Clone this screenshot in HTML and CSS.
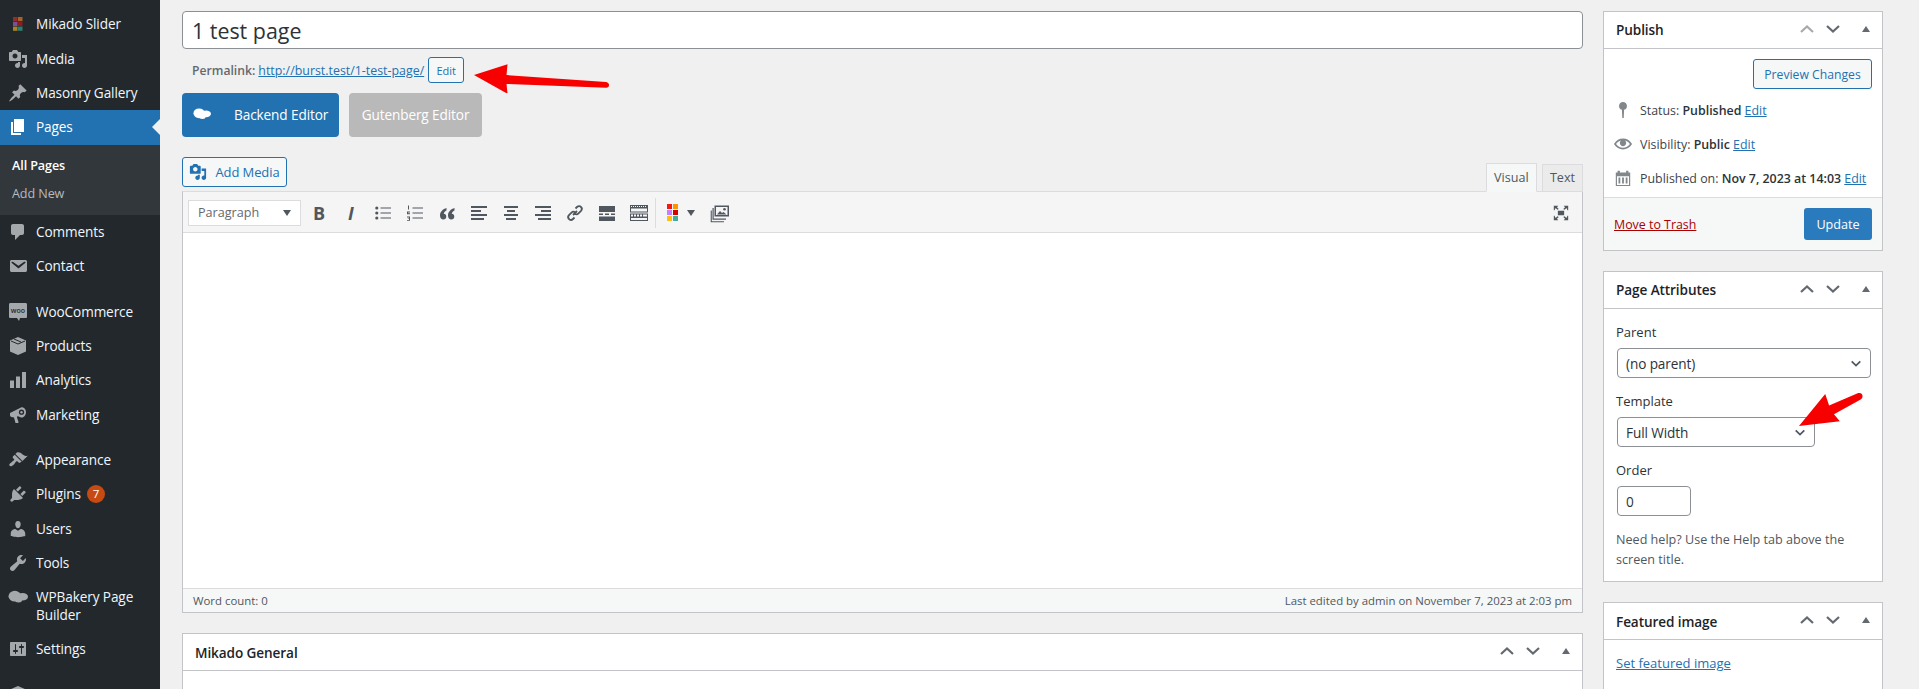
FILE: index.html
```html
<!DOCTYPE html>
<html lang="en">
<head>
<meta charset="utf-8">
<title>Edit Page</title>
<link rel="stylesheet" href="styles.css">
</head>
<body>
<div class="shell">
<nav class="sidebar">
  <ul class="menu">
    <li class="item"><span class="ico"><svg class="grid-ico" viewBox="0 0 10 14"><rect width="4.5" height="4.2" fill="#8f2e2a"/><rect x="5" width="4.5" height="4.2" fill="#a4632a"/><rect y="4.8" width="4.5" height="4.2" fill="#7d4f9a"/><rect x="5" y="4.8" width="4.5" height="4.2" fill="#8e1c1c"/><rect y="9.6" width="4.5" height="4.2" fill="#a98322"/><rect x="5" y="9.6" width="4.5" height="4.2" fill="#2f7c70"/></svg></span>Mikado Slider</li>
    <li class="item"><span class="ico"><svg viewBox="0 0 20 20"><path d="M13 11V4c0-.55-.45-1-1-1h-1.67L9 1H5L3.67 3H2c-.55 0-1 .45-1 1v7c0 .55.45 1 1 1h10c.55 0 1-.45 1-1zM7 4.5c1.38 0 2.5 1.12 2.5 2.5S8.38 9.5 7 9.5 4.5 8.38 4.5 7 5.62 4.5 7 4.5zM14 6h5v10.5c0 1.38-1.12 2.5-2.5 2.5S14 17.88 14 16.5s1.12-2.5 2.5-2.5c.17 0 .34.02.5.05V9h-3V6zm-4 8.05V13h2v3.5c0 1.38-1.12 2.5-2.5 2.5S7 17.88 7 16.5 8.12 14 9.5 14c.17 0 .34.02.5.05z"/></svg></span>Media</li>
    <li class="item"><span class="ico"><svg viewBox="0 0 20 20"><path d="M10.44 3.02l1.82-1.82 6.36 6.35-1.83 1.82c-1.05-.68-2.48-.57-3.41.36l-.75.75c-.92.93-1.04 2.35-.35 3.41l-1.83 1.82-2.41-2.41-2.8 2.79c-.42.42-3.38 2.71-3.8 2.29s1.86-3.39 2.28-3.81l2.79-2.79L4.1 9.36l1.83-1.82c1.05.69 2.48.57 3.4-.36l.75-.75c.93-.92 1.05-2.35.36-3.41z"/></svg></span>Masonry Gallery</li>
    <li class="item active"><span class="ico"><svg viewBox="0 0 20 20"><path d="M6 15V2h10v13H6zm-1 1h8v2H3V5h2v11z"/></svg></span>Pages</li>
    <li class="submenu">
      <a class="sub current">All Pages</a>
      <a class="sub">Add New</a>
    </li>
    <li class="item"><span class="ico"><svg viewBox="0 0 20 20"><path d="M5 2h9c1.1 0 2 .9 2 2v7c0 1.1-.9 2-2 2h-2l-5 5v-5H5c-1.1 0-2-.9-2-2V4c0-1.1.9-2 2-2z"/></svg></span>Comments</li>
    <li class="item"><span class="ico"><svg viewBox="0 0 20 20"><path d="M3.87 4h13.25C18.37 4 19 4.59 19 5.79v8.42c0 1.19-.63 1.79-1.88 1.79H3.87c-1.25 0-1.88-.6-1.88-1.79V5.79c0-1.2.63-1.79 1.88-1.79zm6.62 8.6l6.74-5.53c.24-.2.43-.66.13-1.07-.29-.41-.82-.42-1.17-.17l-5.7 3.86L4.8 5.83c-.35-.25-.88-.24-1.17.17-.3.41-.11.87.13 1.07z"/></svg></span>Contact</li>
    <li class="item sep"><span class="ico"><svg viewBox="0 0 20 20"><path d="M2.5 1h15C18.500 1 19 1.600 19 2.500v12c0 1-.5 1.500-1.500 1.500H12l-1 3-2-3H2.500C1.500 16 1 15.500 1 14.500v-12C1 1.600 1.500 1 2.500 1z"/><text x="10" y="11" class="woo-text">woo</text></svg></span>WooCommerce</li>
    <li class="item"><span class="ico"><svg viewBox="0 0 20 20"><path d="M10 1l8 3.500v11L10 19l-8-3.500v-11z"/><path class="cut" d="M3 5l7 3 7-3M6 3l7 3"/></svg></span>Products</li>
    <li class="item"><span class="ico"><svg viewBox="0 0 20 20"><path d="M2 10.500h4V18H2zM8 6.500h4V18H8zM14 2h4v16h-4z"/></svg></span>Analytics</li>
    <li class="item"><span class="ico"><svg viewBox="0 0 20 20"><path d="M2 8l11-5.500c2.500-1 5 1.500 5 4.500s-2 6-5 5.500L9.500 11 9 12.500l1.500 4.500c.2.600-.3 1-1 1H7.500L6 12.500 3.500 12C2.500 11.700 2 11 2 10z"/><circle class="cut-fill" cx="13.500" cy="7.200" r="2.600"/><circle cx="13.500" cy="7.200" r="1.200"/></svg></span>Marketing</li>
    <li class="item sep"><span class="ico"><svg viewBox="0 0 20 20"><path d="M14.48 11.06L7.41 3.99l1.5-1.5c.5-.56 2.3-.47 3.51.32 1.21.8 1.43 1.28 2.91 2.1 1.18.64 2.45 1.26 4.45.85zm-.71.71L6.7 4.7 4.93 6.47c-.39.39-.39 1.02 0 1.41l1.06 1.06c.39.39.39 1.03 0 1.42-.6.6-1.43 1.11-2.21 1.69-.35.26-.7.53-1.01.84C1.43 13.23.78 14.92 1.7 15.84c.92.92 2.61.27 3.95-1.07.31-.31.58-.66.84-1.01.58-.78 1.09-1.61 1.69-2.21.39-.39 1.03-.39 1.42 0l1.06 1.06c.39.39 1.02.39 1.41 0z"/></svg></span>Appearance</li>
    <li class="item"><span class="ico"><svg viewBox="0 0 20 20"><path d="M13.11 4.36L9.87 7.6 8 5.73l3.24-3.24c.35-.34 1.05-.2 1.56.32.52.51.66 1.21.31 1.55zm-8 1.77l.91-1.12 9.01 9.01-1.19.84c-.71.71-2.63 1.16-3.82 1.16H6.14L4.9 17.26c-.59.59-1.54.59-2.12 0-.59-.58-.59-1.53 0-2.12l1.24-1.24v-3.88c0-1.13.4-3.19 1.09-3.89zm7.26 3.97l3.24-3.24c.34-.35 1.04-.21 1.55.31.52.51.66 1.21.31 1.55l-3.24 3.25z"/></svg></span>Plugins<span class="badge">7</span></li>
    <li class="item"><span class="ico"><svg viewBox="0 0 20 20"><path d="M10 9.25c-2.27 0-2.73-3.44-2.73-3.44C7 4.02 7.82 2 9.97 2c2.16 0 2.98 2.02 2.71 3.81 0 0-.41 3.44-2.68 3.44zm0 2.57L12.72 10c2.39 0 4.52 2.33 4.52 4.53v2.49s-3.65 1.13-7.24 1.13c-3.65 0-7.24-1.13-7.24-1.13v-2.49c0-2.25 1.94-4.48 4.47-4.48z"/></svg></span>Users</li>
    <li class="item"><span class="ico"><svg viewBox="0 0 20 20"><path d="M16.68 9.77c-1.34 1.34-3.3 1.67-4.95.99l-5.41 6.52c-.99.99-2.59.99-3.58 0s-.99-2.59 0-3.57l6.52-5.42c-.68-1.65-.35-3.61.99-4.95 1.28-1.28 3.12-1.62 4.72-1.06l-2.89 2.89 2.82 2.82 2.86-2.87c.53 1.58.18 3.39-1.08 4.65z"/></svg></span>Tools</li>
    <li class="item two"><span class="ico"><svg viewBox="0 0 20 20"><use href="#cloud"/></svg></span>WPBakery Page<br>Builder</li>
    <li class="item"><span class="ico"><svg viewBox="0 0 20 20"><path d="M18 16V4c0-.55-.45-1-1-1H3c-.55 0-1 .45-1 1v12c0 .55.45 1 1 1h14c.55 0 1-.45 1-1zM8 11h1c.55 0 1 .45 1 1s-.45 1-1 1H8v1.5c0 .28-.22.5-.5.5s-.5-.22-.5-.5V13H6c-.55 0-1-.45-1-1s.45-1 1-1h1V5.5c0-.28.22-.5.5-.5s.5.22.5.5V11zm5-2h-1c-.55 0-1-.45-1-1s.45-1 1-1h1V5.5c0-.28.22-.5.5-.5s.5.22.5.5V7h1c.55 0 1 .45 1 1s-.45 1-1 1h-1v5.5c0 .28-.22.5-.5.5s-.5-.22-.5-.5V9z"/></svg></span>Settings</li>
    <li class="item sep"><span class="ico"><svg viewBox="0 0 20 20"><path d="M10 1l8 3.500v11L10 19l-8-3.500v-11z"/></svg></span></li>
  </ul>
</nav>

<main class="content">
  <div class="editor-col">
    <div class="title-box">1 test page</div>
    <div class="permalink">
      <strong class="perm-label">Permalink:</strong>
      <a class="link perm-link">http://burst.test/1-test-page/</a>
      <span class="btn btn-xs">Edit</span>
    </div>
    <div class="switch-row">
      <div class="switch backend"><svg class="cloud" viewBox="0 0 20 20"><use href="#cloud"/></svg>Backend Editor</div>
      <div class="switch gutenberg">Gutenberg Editor</div>
    </div>
    <div class="tool-row">
      <div class="btn add-media"><svg viewBox="0 0 20 20"><path d="M13 11V4c0-.55-.45-1-1-1h-1.67L9 1H5L3.67 3H2c-.55 0-1 .45-1 1v7c0 .55.45 1 1 1h10c.55 0 1-.45 1-1zM7 4.5c1.38 0 2.5 1.12 2.5 2.5S8.38 9.5 7 9.5 4.5 8.38 4.5 7 5.62 4.5 7 4.5zM14 6h5v10.5c0 1.38-1.12 2.5-2.5 2.5S14 17.88 14 16.5s1.12-2.5 2.5-2.5c.17 0 .34.02.5.05V9h-3V6zm-4 8.05V13h2v3.5c0 1.38-1.12 2.5-2.5 2.5S7 17.88 7 16.5 8.12 14 9.5 14c.17 0 .34.02.5.05z"/></svg>Add Media</div>
      <div class="tabs">
        <div class="tab on">Visual</div>
        <div class="tab">Text</div>
      </div>
    </div>
    <div class="editor">
      <div class="toolbar">
        <div class="format">Paragraph<span class="caret"></span></div>
        <span class="tb tb-b">B</span>
        <span class="tb tb-i">I</span>
        <span class="tb"><svg viewBox="0 0 20 20"><path d="M7.500 4.500H18v1H7.500zM7.500 9.500H18v1H7.500zM7.500 14.500H18v1H7.500z"/><circle cx="3.800" cy="5" r="1.600"/><circle cx="3.800" cy="10" r="1.600"/><circle cx="3.800" cy="15" r="1.600"/></svg></span>
        <span class="tb"><svg viewBox="0 0 20 20"><path d="M7.500 4.500H18v1H7.500zM7.500 9.500H18v1H7.500zM7.500 14.500H18v1H7.500z"/><path d="M3 2.500h1v4H3zM2 8.500h3v1H3.200v.8H5v.9H2zM2 13.500h3v4.300H2v-.9h2v-.8H2.800v-.7H4v-.9H2z"/></svg></span>
        <span class="tb"><svg viewBox="0 0 20 20"><path d="M9.500 5C6 6 3 8.500 3 12.500 3 15 4.500 16.500 6.300 16.500c1.800 0 3-1.300 3-3 0-1.500-1-2.700-2.600-2.800.4-1.500 1.500-2.700 2.800-3.300zM17.500 5c-3.500 1-6.500 3.500-6.500 7.500 0 2.500 1.500 4 3.300 4 1.800 0 3-1.300 3-3 0-1.500-1-2.700-2.600-2.800.4-1.500 1.500-2.700 2.800-3.300z"/></svg></span>
        <span class="tb"><svg viewBox="0 0 20 20"><path d="M2 3h16v2H2zM2 7h10v2H2zM2 11h16v2H2zM2 15h13v2H2z"/></svg></span>
        <span class="tb"><svg viewBox="0 0 20 20"><path d="M3 3h14v2H3zM6 7h8v2H6zM3 11h14v2H3zM5 15h10v2H5z"/></svg></span>
        <span class="tb"><svg viewBox="0 0 20 20"><path d="M2 3h16v2H2zM8 7h10v2H8zM2 11h16v2H2zM5 15h13v2H5z"/></svg></span>
        <span class="tb"><svg viewBox="0 0 20 20"><path class="link-ico" d="M8 12l4-4M10.500 5.500l1.500-1.500c1.300-1.300 3-1.300 4 0 1.100 1.100 1.100 2.700 0 3.900l-2.500 2.500c-1.100 1.100-2.600 1.100-3.700.2M9.500 14.500L8 16c-1.300 1.300-3 1.300-4 0-1.100-1.100-1.100-2.700 0-3.900l2.500-2.500c1.100-1.100 2.600-1.100 3.700-.2"/></svg></span>
        <span class="tb"><svg viewBox="0 0 20 20"><path d="M2 3h16v6H2zM2 10.500h4V12H2zM8 10.500h4V12H8zM14 10.500h4V12h-4zM2 13.500h16V18H2z"/></svg></span>
        <span class="tb"><svg viewBox="0 0 20 20"><path fill-rule="evenodd" d="M1 2h18v7.500H1zM2 3v1h1V3zm2 0v1h1V3zm2 0v1h1V3zm2 0v1h1V3zm2 0v1h1V3zm2 0v1h1V3zm2 0v1h1V3zm2 0v1h1V3zM2 5.500v3h16v-3zM1 10.500h18V18H1zM2 11.500v2h2v-2zm3 0v2h2v-2zm3 0v2h2v-2zm3 0v2h2v-2zm3 0v2h4v-2zM2 15v2h16v-2z"/></svg></span>
        <span class="tb-div"></span>
        <span class="colors"><i class="c1"></i><i class="c2"></i><i class="c3"></i><i class="c4"></i><i class="c5"></i><i class="c6"></i></span>
        <span class="caret caret-b"></span>
        <span class="tb tb-gal"><svg viewBox="0 0 20 20"><path d="M4.500 2.500H19v11H4.500zM6 4v8h11.500V4z" fill-rule="evenodd"/><path d="M2.500 5H3.700v10.500H16v1.200H2.500zM.7 7.500H1.800v10.700H14v1.100H.7z"/><path d="M7 11.500l3-3.500 2 2 1.500-1 3 2.500z"/><circle cx="14.500" cy="6.200" r="1.300"/></svg></span>
        <span class="tb tb-full"><svg viewBox="0 0 20 20"><path d="M6.500 7.500h7v5h-7z"/><path d="M2 2h5L5.500 3.500 7.500 5.500 6 6.500 4 4.500 2.800 7 2 7zM18 2v5h-.8L16 4.500 14 6.500 12.500 5.500 14.500 3.500 13 2zM2 18v-5h.8L4 15.500 6 13.500 7.500 14.500 5.500 16.500 7 18zM18 18h-5l1.500-1.500-2-2L14 13.500l2 2 1.200-2.500h.8z"/></svg></span>
      </div>
      <div class="canvas"></div>
      <div class="status"><span>Word count: 0</span><span>Last edited by admin on November 7, 2023 at 2:03 pm</span></div>
    </div>
    <section class="box box-general">
      <header class="box-head"><h2>Mikado General</h2><span class="handles"><svg viewBox="0 0 14 8"><path d="M1 7l6-5.500L13 7"/></svg><svg viewBox="0 0 14 8"><path d="M1 1l6 5.500L13 1"/></svg><i class="tri"></i></span></header>
      <div class="box-fill"></div>
    </section>
  </div>

  <aside class="side-col">
    <section class="box">
      <header class="box-head"><h2 class="lift">Publish</h2><span class="handles"><svg class="dim" viewBox="0 0 14 8"><path d="M1 7l6-5.500L13 7"/></svg><svg viewBox="0 0 14 8"><path d="M1 1l6 5.500L13 1"/></svg><i class="tri"></i></span></header>
      <div class="pub-top"><span class="btn preview">Preview Changes</span></div>
      <div class="pub-row first"><svg class="pub-ico" viewBox="0 0 20 20"><path d="M10 1a4.500 4.500 0 0 1 1.200 8.800L10.800 19H9.200L8.800 9.800A4.500 4.500 0 0 1 10 1z"/></svg><span>Status: <b>Published</b> <a class="link">Edit</a></span></div>
      <div class="pub-row"><svg class="pub-ico" viewBox="0 0 20 20"><path d="M19.700 9.400C17.700 6 14 3.900 10 3.900S2.300 6 .3 9.400L0 10l.3.6c2 3.400 5.700 5.500 9.700 5.500s7.700-2.100 9.700-5.500l.3-.6-.3-.6zM10 14.100c-3.100 0-6-1.600-7.700-4.100C3.600 8 5.700 6.600 8 6.100c-.9.6-1.500 1.700-1.500 2.900 0 1.900 1.600 3.500 3.500 3.500s3.500-1.600 3.500-3.500c0-1.200-.6-2.300-1.500-2.900 2.300.5 4.400 1.900 5.700 3.900-1.700 2.500-4.600 4.100-7.700 4.100z"/></svg><span>Visibility: <b>Public</b> <a class="link">Edit</a></span></div>
      <div class="pub-row"><svg class="pub-ico" viewBox="0 0 20 20"><path fill-rule="evenodd" d="M2 4h2V2h2.500v2h7V2H16v2h2v15H2zM3.300 8v9.800h13.400V8zM5 9.500h2V16H5zM9 9.500h2V16H9zM13 9.500h2V16h-2z"/></svg><span>Published on: <b>Nov 7, 2023 at 14:03</b> <a class="link">Edit</a></span></div>
      <div class="pub-foot"><a class="trash">Move to Trash</a><span class="update">Update</span></div>
    </section>

    <section class="box">
      <header class="box-head"><h2 class="lift">Page Attributes</h2><span class="handles"><svg viewBox="0 0 14 8"><path d="M1 7l6-5.500L13 7"/></svg><svg viewBox="0 0 14 8"><path d="M1 1l6 5.500L13 1"/></svg><i class="tri"></i></span></header>
      <div class="attrs">
        <div class="attr-label">Parent</div>
        <div class="field sel-wide">(no parent)<svg viewBox="0 0 14 8"><path d="M2 1.500l5 5 5-5"/></svg></div>
        <div class="attr-label">Template</div>
        <div class="field sel-mid">Full Width<svg viewBox="0 0 14 8"><path d="M2 1.500l5 5 5-5"/></svg></div>
        <div class="attr-label">Order</div>
        <div class="field num">0</div>
        <p class="help">Need help? Use the Help tab above the screen title.</p>
      </div>
    </section>

    <section class="box">
      <header class="box-head"><h2>Featured image</h2><span class="handles"><svg viewBox="0 0 14 8"><path d="M1 7l6-5.500L13 7"/></svg><svg viewBox="0 0 14 8"><path d="M1 1l6 5.500L13 1"/></svg><i class="tri"></i></span></header>
      <div class="feat"><a class="link">Set featured image</a></div>
    </section>
  </aside>
</main>
</div>

<svg class="arrow arrow-a" viewBox="0 0 140 30"><path d="M0 12L34 1l-1 11 101 7c4 .5 4 6 0 6L33 21l1 10z"/></svg>
<svg class="arrow arrow-b" viewBox="0 0 70 36"><path d="M0 35L27 2l4 12 30-13c5-1 6 5 2 7L36 23l6 7z"/></svg>

<svg class="defs" aria-hidden="true"><defs><symbol id="cloud" viewBox="0 0 20 20"><ellipse cx="6.800" cy="9.200" rx="6.300" ry="5.400"/><ellipse cx="14.500" cy="9.800" rx="5.500" ry="3.800"/><ellipse cx="10.500" cy="13" rx="3.500" ry="2.500"/></symbol></defs></svg>
</body>
</html>
```

FILE: styles.css
```css
* { box-sizing: border-box; }
html, body { margin: 0; height: 689px; overflow: hidden; }
body {
  background: #f0f0f1;
  color: #3c434a;
  font-family: "Open Sans", "Noto Sans", "Liberation Sans", sans-serif;
  font-size: 13px;
  position: relative;
}
a { color: inherit; }
.defs { position: absolute; width: 0; height: 0; }
.shell { display: flex; height: 689px; overflow: hidden; }

/* sidebar */
.sidebar { width: 160px; flex: none; background: #23282d; color: #f0f6fc; font-size: 13.6px; letter-spacing: -.1px; }
.menu { list-style: none; margin: 0; padding: 7.3px 0 0; }
.item { height: 34.33px; display: flex; align-items: center; position: relative; padding-left: 36px; padding-top: 0; line-height: 18px; white-space: nowrap; }
.item .ico { position: absolute; left: 0; top: 0; width: 36px; height: 34px; display: flex; align-items: center; justify-content: center; }
.item .ico svg { width: 20px; height: 20px; fill: #a5a8ab; }
.item .ico svg.grid-ico { width: 10px; height: 14px; }
.item.sep { margin-top: 11px; }
.item.two { height: 52px; white-space: normal; display: block; padding-top: 8px; }
.item.active { background: #2271b1; color: #fff; }
.item.active .ico svg { fill: #fff; }
.item.active::after { content: ""; position: absolute; right: 0; top: 9px; border: 8px solid transparent; border-left-width: 0; border-right-color: #f0f0f1; }
.cut { fill: none; stroke: #23282d; stroke-width: 1; }
.cut-fill { fill: #23282d !important; }
.woo-text { fill: #23282d; font-family: "Open Sans", sans-serif; font-size: 7px; font-weight: 600; text-anchor: middle; letter-spacing: 0; }
.badge { width: 18px; height: 18px; border-radius: 50%; background: #c64a12; color: #fff; font-size: 11.5px; display: flex; align-items: center; justify-content: center; margin-left: 6px; }
.submenu { background: #32373c; height: 70.4px; padding-top: 7px; font-size: 12.6px; }
.sub { display: block; padding-left: 12px; height: 28px; line-height: 28px; color: #b8babc; }
.sub.current { color: #fff; font-weight: 600; }

/* layout */
.content { flex: 1; display: flex; gap: 20px; padding: 11px 36px 0 22px; min-width: 0; }
.editor-col { width: 1401px; flex: none; }
.side-col { width: 280px; flex: none; display: flex; flex-direction: column; gap: 20px; padding-top: 0; }

/* title */
.title-box { height: 38px; background: #fff; border: 1px solid #8c8f94; border-radius: 4px; font-size: 21.4px; line-height: 38px; padding-left: 9px; color: #2c3338; }
.permalink { display: flex; align-items: center; height: 26px; margin-top: 8px; padding-left: 10px; font-size: 12.4px; color: #646970; }
.perm-label { font-weight: 600; font-size: 12.2px; }
.perm-link { margin-left: 3px; }
.link { color: #2271b1; text-decoration: underline; }
.btn { display: inline-flex; align-items: center; justify-content: center; background: #f6f7f7; border: 1px solid #2271b1; border-radius: 3px; color: #2271b1; }
.btn-xs { width: 36px; height: 26px; margin-left: 4px; font-size: 11px; }
.switch-row { display: flex; gap: 10px; margin-top: 10px; }
.switch { height: 44px; border-radius: 4px; color: #fff; display: flex; align-items: center; font-size: 13.6px; letter-spacing: -.1px; padding-bottom: 2px; }
.backend { width: 157px; background: #2271b1; padding-left: 11px; }
.backend .cloud { width: 18px; height: 18px; fill: #fff; margin-right: 23px; }
.gutenberg { width: 133px; background: #b9b9b9; justify-content: center; }
.tool-row { display: flex; justify-content: space-between; align-items: flex-end; margin-top: 20px; height: 34px; }
.add-media { height: 30px; width: 105px; margin-bottom: 4px; font-size: 13px; letter-spacing: -.1px; gap: 8px; }
.add-media svg { width: 18px; height: 18px; fill: #2271b1; }
.tabs { display: flex; gap: 5px; align-items: flex-end; margin-bottom: -1px; position: relative; z-index: 1; }
.tab { height: 28px; padding: 0 7px; line-height: 26px; font-size: 12.6px; border: 1px solid #dcdcde; background: #ebebec; color: #50575e; }
.tab.on { background: #f6f7f7; border-bottom-color: #f6f7f7; height: 29px; width: 51px; text-align: center; line-height: 27px; }
.editor { border: 1px solid #c3c4c7; border-top-color: #dcdcde; background: #fff; }
.toolbar { height: 41px; background: #f5f5f5; border-bottom: 1px solid #dcdcde; display: flex; align-items: center; padding: 1px 0 0 5px; }
.format { width: 113px; height: 26px; background: #fff; border: 1px solid #dcdcde; display: flex; align-items: center; justify-content: space-between; padding: 0 9px; font-size: 12.6px; color: #646970; margin-right: 2px; }
.caret { width: 0; height: 0; border: 4px solid transparent; border-top: 6px solid #50575e; border-bottom-width: 0; }
.tb { width: 32px; height: 26px; display: inline-flex; align-items: center; justify-content: center; color: #50575e; flex: none; }
.tb svg { width: 20px; height: 20px; fill: #50575e; }
.tb-b { font: 700 18px "Open Sans", sans-serif; }
.tb-i { font: italic 700 18px "Open Sans", sans-serif; }
.link-ico { fill: none; stroke: #50575e; stroke-width: 1.8; }
.tb-div { width: 1px; height: 30px; background: #dcdcde; }
.colors { display: grid; grid-template-columns: 5px 5px; grid-auto-rows: 5px; gap: 1px 1px; margin-left: 11px; margin-right: 9px; }
.colors i { display: block; }
.c1 { background: #f51b0c; }
.c2 { background: #ff9500; }
.c3 { background: #c77dff; }
.c4 { background: #d40000; }
.c5 { background: #ffbf0f; }
.c6 { background: #3fae9a; }
.caret-b { margin-right: 9px; }
.tb-full { margin-left: auto; margin-right: 5px; }
.tb-full svg { width: 18px; height: 18px; }
.canvas { height: 355px; background: #fff; }
.status { height: 24px; background: #f6f7f7; border-top: 1px solid #dcdcde; display: flex; justify-content: space-between; align-items: center; padding: 0 10px; font-size: 11.4px; color: #50575e; }

/* boxes */
.box { background: #fff; border: 1px solid #c3c4c7; flex: none; }
.box-general { margin-top: 20px; }
.box-fill { height: 40px; }
.box-head { height: 37px; border-bottom: 1px solid #c3c4c7; display: flex; align-items: center; justify-content: space-between; padding: 0 12px 0 12px; }
.box-head h2 { margin: 0; font-size: 13.6px; font-weight: 600; color: #1d2327; letter-spacing: -.1px; }
.box-head h2.lift { margin-top: -1px; }
.handles { display: flex; align-items: center; gap: 12px; margin-top: -2px; }
.handles svg { width: 14px; height: 8px; fill: none; stroke: #646970; stroke-width: 2.2; }
.handles svg.dim { stroke: #a7aaad; }
.tri { width: 0; height: 0; border: 4px solid transparent; border-bottom: 6px solid #646970; border-top-width: 0; margin-left: 10px; }
.pub-top { display: flex; justify-content: flex-end; padding: 10px 10px 0; }
.preview { width: 119px; height: 30px; font-size: 12.2px; }
.pub-row { display: flex; align-items: center; height: 34px; padding-left: 10px; font-size: 12.4px; }
.pub-row.first { margin-top: 4px; }
.pub-row b { font-weight: 600; color: #2c3338; }
.pub-ico { width: 18px; height: 18px; fill: #82878c; margin-right: 8px; flex: none; }
.pub-foot { margin-top: 2px; height: 53px; background: #f6f7f7; border-top: 1px solid #dcdcde; display: flex; justify-content: space-between; align-items: center; padding: 0 10px; font-size: 12.4px; }
.trash { color: #a00; text-decoration: underline; }
.update { width: 68px; height: 32px; border-radius: 3px; background: #2a7bbd; color: #fff; display: flex; align-items: center; justify-content: center; font-size: 12.6px; }
.attrs { padding: 14px 12px 0; height: 272px; }
.attr-label { font-size: 13px; color: #2c3338; height: 18px; line-height: 18px; margin-bottom: 7px; }
.field { height: 30px; background: #fff; border: 1px solid #8c8f94; border-radius: 4px; display: flex; align-items: center; justify-content: space-between; padding: 0 8px 0 8px; margin: 0 0 14px 1px; color: #2c3338; font-size: 13.6px; letter-spacing: -.1px; }
.field svg { width: 12px; height: 7px; fill: none; stroke: #50575e; stroke-width: 2; }
.sel-wide { width: 254px; }
.sel-mid { width: 198px; }
.num { width: 74px; }
.help { margin: 0; line-height: 20px; font-size: 12.6px; color: #50575e; }
.feat { padding: 14px 12px; height: 60px; font-size: 13px; }

/* annotations */
.arrow { position: absolute; fill: #f70000; }
.arrow-a { left: 474px; top: 63px; width: 138px; height: 30px; }
.arrow-b { left: 1799px; top: 392px; width: 68px; height: 35px; }
```
